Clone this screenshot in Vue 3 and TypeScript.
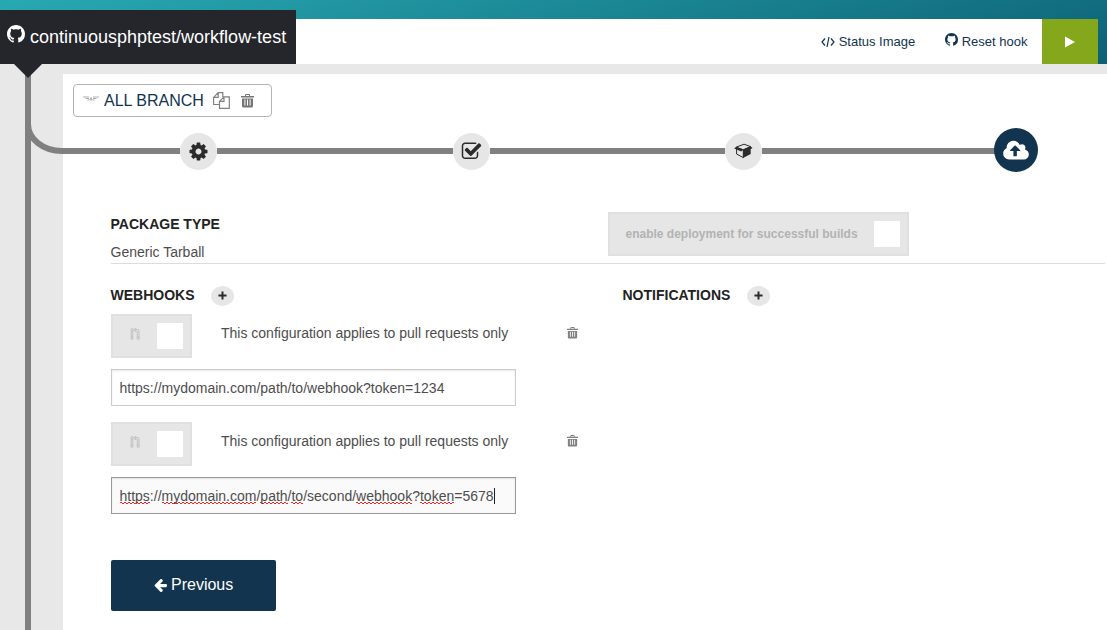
<script setup lang="ts">
import { ref } from 'vue'

interface UrlPart {
  text: string
  flagged?: boolean
}

interface Webhook {
  id: number
  focused: boolean
  url: UrlPart[]
}

const webhooks = ref<Webhook[]>([
  { id: 1, focused: false, url: [{ text: 'https://mydomain.com/path/to/webhook?token=1234' }] },
  {
    id: 2,
    focused: true,
    url: [
      { text: 'https', flagged: true },
      { text: '://' },
      { text: 'mydomain.com', flagged: true },
      { text: '/' },
      { text: 'path', flagged: true },
      { text: '/' },
      { text: 'to', flagged: true },
      { text: '/second/' },
      { text: 'webhook', flagged: true },
      { text: '?' },
      { text: 'token', flagged: true },
      { text: '=5678' },
    ],
  },
])
const github =
  'M8 0C3.58 0 0 3.58 0 8c0 3.54 2.29 6.53 5.47 7.59.4.07.55-.17.55-.38 0-.19-.01-.82-.01-1.49-2.01.37-2.53-.49-2.69-.94-.09-.23-.48-.94-.82-1.13-.28-.15-.68-.52-.01-.53.63-.01 1.08.58 1.23.82.72 1.21 1.87.87 2.33.66.07-.52.28-.87.51-1.07-1.78-.2-3.64-.89-3.64-3.95 0-.87.31-1.59.82-2.15-.08-.2-.36-1.02.08-2.12 0 0 .67-.21 2.2.82.64-.18 1.32-.27 2-.27.68 0 1.36.09 2 .27 1.53-1.04 2.2-.82 2.2-.82.44 1.1.16 1.92.08 2.12.51.56.82 1.27.82 2.15 0 3.07-1.87 3.75-3.65 3.95.29.25.54.73.54 1.48 0 1.07-.01 1.93-.01 2.2 0 .21.15.46.55.38A8.013 8.013 0 0016 8c0-4.42-3.58-8-8-8z'
const cog =
  'M1152 896q0-106-75-181t-181-75-181 75-75 181 75 181 181 75 181-75 75-181zm512-109v222q0 12-8 23t-20 13l-185 28q-19 54-39 91 35 50 107 138 10 12 10 25t-9 23q-27 37-99 108t-94 71q-12 0-26-9l-138-108q-44 23-91 38-16 136-29 186-7 28-36 28h-222q-14 0-24.5-8.5t-11.5-21.5l-28-184q-49-16-90-37l-141 107q-10 9-25 9-14 0-25-11-126-114-165-168-7-10-7-23 0-12 8-23 15-21 51-66.5t54-70.5q-27-50-41-99l-183-27q-13-2-21-12.5t-8-23.5v-222q0-12 8-23t19-13l186-28q14-46 39-92-40-57-107-138-10-12-10-24 0-10 9-23 26-36 98.5-107.5t94.5-71.5q13 0 26 10l138 107q44-23 91-38 16-136 29-186 7-28 36-28h222q14 0 24.5 8.5t11.5 21.5l28 184q49 16 90 37l142-107q9-9 24-9 13 0 25 10 129 119 165 170 7 8 7 22 0 12-8 23-15 21-51 66.5t-54 70.5q26 50 41 98l183 28q13 2 21 12.5t8 23.5z'
const check =
  'M1472 930v318q0 119-84.5 203.5t-203.5 84.5h-832q-119 0-203.5-84.5t-84.5-203.5v-832q0-119 84.5-203.5t203.5-84.5h832q63 0 117 25 15 7 18 23 3 17-9 29l-49 49q-10 10-23 10-3 0-9-2-23-6-45-6h-832q-66 0-113 47t-47 113v832q0 66 47 113t113 47h832q66 0 113-47t47-113v-254q0-13 9-22l64-64q10-10 23-10 6 0 12 3 20 8 20 29zm231-489l-814 814q-24 24-57 24t-57-24l-430-430q-24-24-24-57t24-57l110-110q24-24 57-24t57 24l263 263 647-647q24-24 57-24t57 24l110 110q24 24 24 57t-24 57z'
const cloud =
  'M1216 864q0-14-9-23l-352-352q-9-9-23-9t-23 9l-351 351q-10 12-10 24 0 14 9 23t23 9h224v352q0 13 9.5 22.5t22.5 9.5h192q13 0 22.5-9.5t9.5-22.5v-352h224q13 0 22.5-9.5t9.5-22.5zm640 288q0 159-112.5 271.5t-271.5 112.5h-1088q-185 0-316.5-131.5t-131.5-316.5q0-130 70-240t188-165q-2-30-2-43 0-212 150-362t362-150q156 0 285.5 87t188.5 231q71-62 166-62 106 0 181 75t75 181q0 76-41 138 130 31 213.5 135.5t83.5 238.5z'
const arrowLeft =
  'M1664 896v128q0 53-32.5 90.5t-84.5 37.5h-704l293 294q38 36 38 90t-38 90l-75 76q-37 37-90 37-52 0-91-37l-651-652q-37-37-37-90 0-52 37-91l651-650q38-38 91-38 52 0 90 38l75 74q38 38 38 91t-38 91l-293 293h704q52 0 84.5 37.5t32.5 90.5z'
const trash =
  'M0 2h4V1q0-1 1-1h3q1 0 1 1v1h4v1.5H0zM5 1v1h3V1zM1 4.5h11V12q0 1.5-1.5 1.5h-8Q1 13.5 1 12zM3.4 5.5v6h1v-6zM6 5.5v6h1v-6zM8.6 5.5v6h1v-6z'
</script>

<template>
  <div class="page">
    <header class="top">
      <div class="repo">
        <svg class="repo-icon" viewBox="0 0 16 16"><path :d="github" /></svg>
        <span class="repo-name">continuousphptest/workflow-test</span>
      </div>
      <nav class="actions">
        <a class="action status">
          <svg class="code-icon" viewBox="0 0 14 12"><path d="M4 2.5L1 6l3 3.5M10 2.5L13 6l-3 3.5M8 1L6 11" /></svg>
          <span>Status Image</span>
        </a>
        <a class="action reset">
          <svg class="hook-icon" viewBox="0 0 16 16"><path :d="github" /></svg>
          <span>Reset hook</span>
        </a>
        <button class="play" aria-label="Start build">
          <svg width="10" height="12" viewBox="0 0 10 12"><path d="M0 0.5L10 6L0 11.5z" /></svg>
        </button>
      </nav>
    </header>

    <div class="body">
      <aside class="rail"></aside>
      <main class="content">
        <div class="branch">
          <svg class="wings" viewBox="0 0 16 6">
            <path d="M0 1h6M10 1h6M2.5 2.5H6M10 2.5h3.5M4.5 4H6M10 4h1.5" />
            <path d="M8 1.6L9.3 4H6.7z" />
          </svg>
          <span class="branch-name">ALL BRANCH</span>
          <svg class="copy" viewBox="0 0 17 17">
            <path d="M6.5 12.5H.6V5.4L5.2 .7h4.6V5M5.2 .7V5.4H.6M6.5 9.4L11 4.8h5.3v11.5H6.5zM11 4.8V9.4H6.5" />
          </svg>
          <svg class="branch-trash" viewBox="0 0 13 14"><path fill-rule="evenodd" :d="trash" /></svg>
        </div>

        <div class="steps">
          <div class="step first">
            <svg width="21" height="21" viewBox="0 0 1792 1792"><path :d="cog" /></svg>
          </div>
          <div class="step">
            <svg width="21" height="21" viewBox="0 0 1792 1792"><path :d="check" /></svg>
          </div>
          <div class="step package-step">
            <svg width="19" height="16" viewBox="0 0 19 16">
              <path class="box-line" d="M2.2 4.2L10 1.2l6.6 2.4L9.3 6.8zM2.6 4.8V11l6.7 3.6V6.8" />
              <path d="M9 6.5L16.7 3.3V11L9 15zM.2 5.6L2.2 3.8L9.4 6.6L7.2 8.6zM9.4 6.8L16.8 3.4L18.5 5.2L11 8.4z" />
            </svg>
          </div>
          <div class="step current">
            <svg width="26" height="24" viewBox="-64 0 1920 1792"><path :d="cloud" /></svg>
          </div>
        </div>

        <section class="package">
          <div class="package-text">
            <h2>PACKAGE TYPE</h2>
            <p>Generic Tarball</p>
          </div>
          <div class="toggle deploy">
            <span>enable deployment for successful builds</span>
            <i class="knob"></i>
          </div>
        </section>

        <div class="columns">
          <section>
            <div class="heading">
              <h2>WEBHOOKS</h2>
              <button class="add" aria-label="Add webhook"><svg viewBox="0 0 10 10"><path d="M5 .5v9M.5 5h9" /></svg></button>
            </div>
            <div v-for="hook in webhooks" :key="hook.id" class="hook">
              <div class="hook-row">
                <div class="toggle pull">
                  <svg class="pull-icon" viewBox="0 0 10 12">
                    <path d="M1.2 3v6M2.8 3v6M4.4 1.4h3q1.6 0 1.6 1.6v6.2M4.8 3h1.8q.7 0 .7.7v5.5M5.6 0L4.2 2.2L5.6 4.2" />
                    <circle cx="2" cy="1.8" r="1.2" /><circle cx="2" cy="10.2" r="1.2" /><circle cx="8.2" cy="10.2" r="1.2" />
                  </svg>
                  <i class="knob"></i>
                </div>
                <span class="hook-label">This configuration applies to pull requests only</span>
                <svg class="hook-trash" viewBox="0 0 13 14"><path fill-rule="evenodd" :d="trash" /></svg>
              </div>
              <div class="url" :class="{ focused: hook.focused }">
                <span v-for="(part, i) in hook.url" :key="i" :class="{ flagged: part.flagged }">{{ part.text }}</span><i v-if="hook.focused" class="caret"></i>
              </div>
            </div>
          </section>
          <section class="notifications">
            <div class="heading">
              <h2>NOTIFICATIONS</h2>
              <button class="add" aria-label="Add notification"><svg viewBox="0 0 10 10"><path d="M5 .5v9M.5 5h9" /></svg></button>
            </div>
          </section>
        </div>

        <button class="previous">
          <svg width="15" height="16" viewBox="0 0 1792 1792"><path :d="arrowLeft" /></svg>
          <span>Previous</span>
        </button>
      </main>
    </div>

    <svg class="track" width="1107" height="630">
      <path d="M28 70V630M28 124A34 27 0 0 0 62 151H180M217 151H453M490 151H725M762 151H995" />
      <polygon points="14,64 42,64 28,78" />
    </svg>
  </div>
</template>

<style>
body {
  margin: 0;
}
</style>

<style scoped>
* {
  box-sizing: border-box;
}
.page {
  position: relative;
  width: 1107px;
  height: 630px;
  overflow: hidden;
  font-family: "Liberation Sans", Arial, sans-serif;
  font-size: 14px;
  color: #4d4d4d;
  background: #fff;
}
svg {
  display: block;
  flex: none;
}
h2,
p {
  margin: 0;
}
button {
  border: 0;
  padding: 0;
  font-family: inherit;
}
.top {
  display: flex;
  height: 64px;
  padding-right: 9px;
  background: linear-gradient(165deg, #28a9b1 0%, #0c6075 100%);
}
.repo {
  display: flex;
  width: 296px;
  height: 54px;
  margin-top: 10px;
  padding-left: 7px;
  background: #25262c;
  color: #fff;
}
.repo-icon {
  width: 18px;
  height: 18px;
  margin: 15px 5px 0 0;
  fill: #fff;
}
.repo-name {
  font-size: 18px;
  line-height: 54px;
  white-space: nowrap;
}
.actions {
  display: flex;
  flex: 1;
  justify-content: flex-end;
  height: 45px;
  margin-top: 19px;
  background: #fff;
}
.action {
  display: flex;
  align-items: center;
  font-size: 13px;
  color: #12344e;
  white-space: nowrap;
}
.status {
  margin-right: 30px;
}
.reset {
  margin-right: 14.5px;
}
.code-icon {
  width: 14px;
  height: 12px;
  margin-right: 3.5px;
  fill: none;
  stroke: #12344e;
  stroke-width: 1.2;
}
.hook-icon {
  width: 13px;
  height: 13px;
  margin: -4px 3.5px 0 0;
  fill: #12344e;
}
.play {
  display: flex;
  align-items: center;
  justify-content: center;
  width: 56px;
  background: #85a71c;
}
.play svg {
  fill: #fff;
}
.body {
  display: flex;
  height: 566px;
  padding-top: 10px;
  background: #e8e8e8;
}
.rail {
  width: 63px;
}
.content {
  flex: 1;
  padding: 10px 0 0 10px;
  background: #fff;
}
.branch {
  display: flex;
  align-items: center;
  width: 199px;
  height: 33px;
  padding-left: 9px;
  border: 1px solid #b3b3b3;
  border-radius: 4px;
}
.wings {
  width: 16px;
  height: 6px;
  margin: -4px 5px 0 0;
  fill: none;
  stroke: #8c8c8c;
  stroke-width: 0.7;
}
.branch-name {
  width: 108px;
  font-size: 16px;
  color: #12344e;
  white-space: nowrap;
}
.copy {
  width: 17px;
  height: 17px;
  margin-left: 0.5px;
  fill: none;
  stroke: #808080;
  stroke-width: 1.2;
}
.branch-trash {
  width: 13px;
  height: 14px;
  margin-left: 11.5px;
  fill: #757575;
}
.steps {
  position: relative;
  z-index: 1;
  display: grid;
  grid-template-columns: 273px 272px 269px 44px;
  align-items: center;
  height: 44px;
  margin: 11px 0 0 107px;
}
.step {
  display: flex;
  align-items: center;
  justify-content: center;
  width: 37px;
  height: 37px;
  margin-top: 3px;
  border-radius: 50%;
  background: #e6e6e6;
  fill: #2b2b2b;
}
.package-step svg {
  margin-top: -2px;
}
.box-line {
  fill: none;
  stroke: #2b2b2b;
  stroke-width: 1;
}
.step.current {
  width: 44px;
  height: 44px;
  margin-top: 0;
  padding-top: 1px;
  background: #12344e;
  fill: #fff;
}
.package {
  display: flex;
  justify-content: space-between;
  height: 52px;
  margin: 40px 2px 0 38px;
  padding-right: 196px;
  border-bottom: 1px solid #dcdcdc;
}
.package-text {
  margin-left: -0.5px;
}
h2 {
  font-size: 14px;
  line-height: 16px;
  color: #222;
}
.package h2 {
  margin-top: 4px;
}
.package p {
  margin-top: 12px;
  line-height: 16px;
}
.toggle {
  display: flex;
  align-items: center;
  height: 44px;
  border: 2px solid #e0e0e0;
  background: #e6e6e6;
}
.deploy {
  width: 301px;
  padding-left: 15.5px;
  font-size: 12px;
  font-weight: bold;
  color: #b3b3b3;
  white-space: nowrap;
}
.deploy span {
  width: 248.5px;
  line-height: 14px;
}
.knob {
  width: 26px;
  height: 26px;
  background: #fff;
}
.columns {
  display: grid;
  grid-template-columns: 512px 1fr;
  margin: 22px 0 0 38px;
}
.heading {
  display: flex;
  align-items: center;
  height: 20px;
  margin-bottom: 8px;
}
.heading h2 {
  margin: -2px 0 0 -0.5px;
}
.add {
  display: flex;
  align-items: center;
  justify-content: center;
  width: 23px;
  height: 20px;
  margin-left: 16px;
  border-radius: 50%;
  background: #e6e6e6;
}
.notifications .add {
  margin-left: 16.8px;
}
.add svg {
  width: 9px;
  height: 9px;
  margin-top: -1px;
  stroke: #2b2b2b;
  stroke-width: 2.2;
}
.hook {
  height: 108px;
}
.hook-row {
  display: flex;
  height: 44px;
}
.pull {
  width: 81px;
  padding-left: 16.5px;
}
.pull-icon {
  width: 10px;
  height: 12px;
  margin: -4px 17.5px 0 0;
  fill: none;
  stroke: #aaa;
  stroke-width: 0.6;
}
.hook-label {
  width: 346px;
  margin: 11px 0 0 29px;
  line-height: 16px;
}
.hook-trash {
  width: 11px;
  height: 12px;
  margin-top: 13px;
  fill: #808080;
}
.url {
  display: flex;
  align-items: center;
  width: 405px;
  height: 37px;
  margin-top: 11px;
  padding-left: 7.5px;
  border: 1px solid #ccc;
  box-shadow: inset 0 1px 2px rgba(0, 0, 0, 0.1);
  white-space: pre;
}
.url.focused {
  border-color: #999;
  background: #fafafa;
}
/* two offset rows of dashes form the spell-check wave */
.flagged {
  background-image:
    linear-gradient(90deg, #f22 50%, transparent 50%),
    linear-gradient(90deg, transparent 50%, #f22 50%);
  background-repeat: repeat-x;
  background-size: 4px 1px;
  background-position: 0 calc(100% - 1px), 0 100%;
}
.caret {
  width: 1px;
  height: 16px;
  background: #222;
}
.previous {
  display: flex;
  align-items: center;
  width: 165px;
  height: 51px;
  margin: 30px 0 0 38px;
  padding: 0 0 2px 42px;
  border-radius: 2px;
  background: #12344e;
  color: #fff;
  font-size: 16px;
}
.previous svg {
  margin-right: 3px;
  fill: #fff;
}
.track {
  position: absolute;
  top: 0;
  left: 0;
  pointer-events: none;
}
.track path {
  fill: none;
  stroke: #808080;
  stroke-width: 6;
}
.track polygon {
  fill: #25262c;
}
</style>
